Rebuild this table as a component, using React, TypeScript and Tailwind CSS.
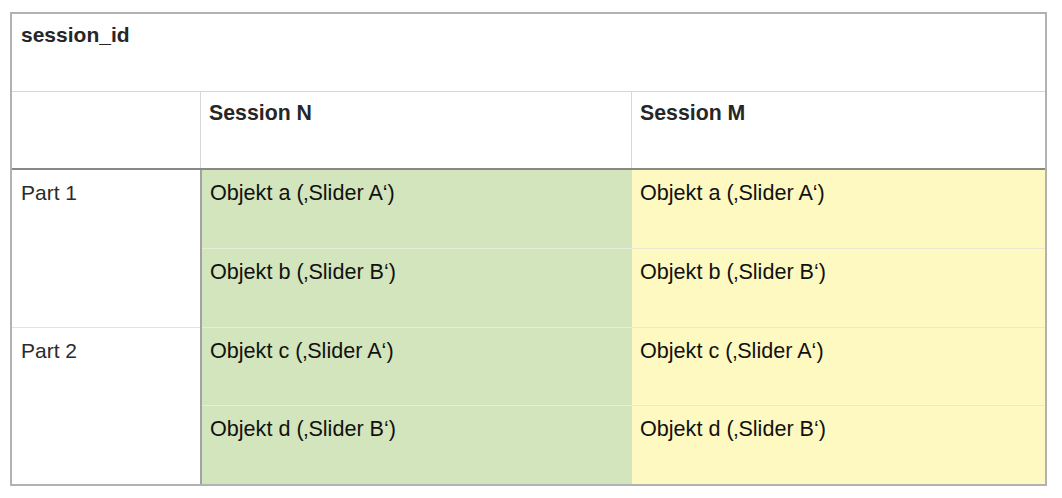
import React from 'react';

const ROWS = [
  { part: 'Part 1', n: 'Objekt a (‚Slider A‘)', m: 'Objekt a (‚Slider A‘)' },
  { part: '', n: 'Objekt b (‚Slider B‘)', m: 'Objekt b (‚Slider B‘)' },
  { part: 'Part 2', n: 'Objekt c (‚Slider A‘)', m: 'Objekt c (‚Slider A‘)' },
  { part: '', n: 'Objekt d (‚Slider B‘)', m: 'Objekt d (‚Slider B‘)' },
];

const cell = 'px-[8px] pt-[11px] leading-[24px]';
const head = 'px-[8px] pt-[9px] leading-[24px]';

export default function App() {
  return (
    <div className="w-[1062px] h-[498px] bg-white pt-[12px] pl-[10px] font-['Liberation_Sans',Arial,sans-serif] text-[21px]">
      <div className="w-[1037px] border-2 border-[#b2b2b2]">
        {/* title row */}
        <div className={`h-[78px] border-b border-[#d6d6d6] font-bold text-[#262626] pl-[9px] ${head}`}>session_id</div>

        {/* column headers */}
        <div className="flex h-[78px] border-b-2 border-[#8a8884] font-bold text-[#262626] text-[21.3px]">
          <div className="w-[189px] shrink-0 border-r border-[#d8d8d8]" />
          <div className={`w-[431px] shrink-0 border-r border-[#d8d8d8] ${head}`}>Session N</div>
          <div className={`flex-1 ${head}`}>Session M</div>
        </div>

        {/* body */}
        <div className="flex h-[314px]">
          <div className="w-[190px] shrink-0 border-r-2 border-[#a2a2a2] flex flex-col text-[#2b2b2b]">
            <div className={`flex-1 border-b border-[#e2e2e2] pl-[9px] ${cell}`}>Part 1</div>
            <div className={`flex-1 pl-[9px] ${cell}`}>Part 2</div>
          </div>
          <div className="w-[430px] shrink-0 flex flex-col bg-[#d3e5bc] text-[#111] text-[21.6px]">
            {ROWS.map((r, i) => (
              <div key={r.n} className={`flex-1 ${i < 3 ? 'border-b border-[#e6eedc]' : ''} ${cell}`}>{r.n}</div>
            ))}
          </div>
          <div className="flex-1 flex flex-col bg-[#fef9c1] text-[#111] text-[21.6px]">
            {ROWS.map((r, i) => (
              <div key={r.m} className={`flex-1 ${i < 3 ? 'border-b border-[#ebe8d2]' : ''} ${cell}`}>{r.m}</div>
            ))}
          </div>
        </div>
      </div>
    </div>
  );
}
